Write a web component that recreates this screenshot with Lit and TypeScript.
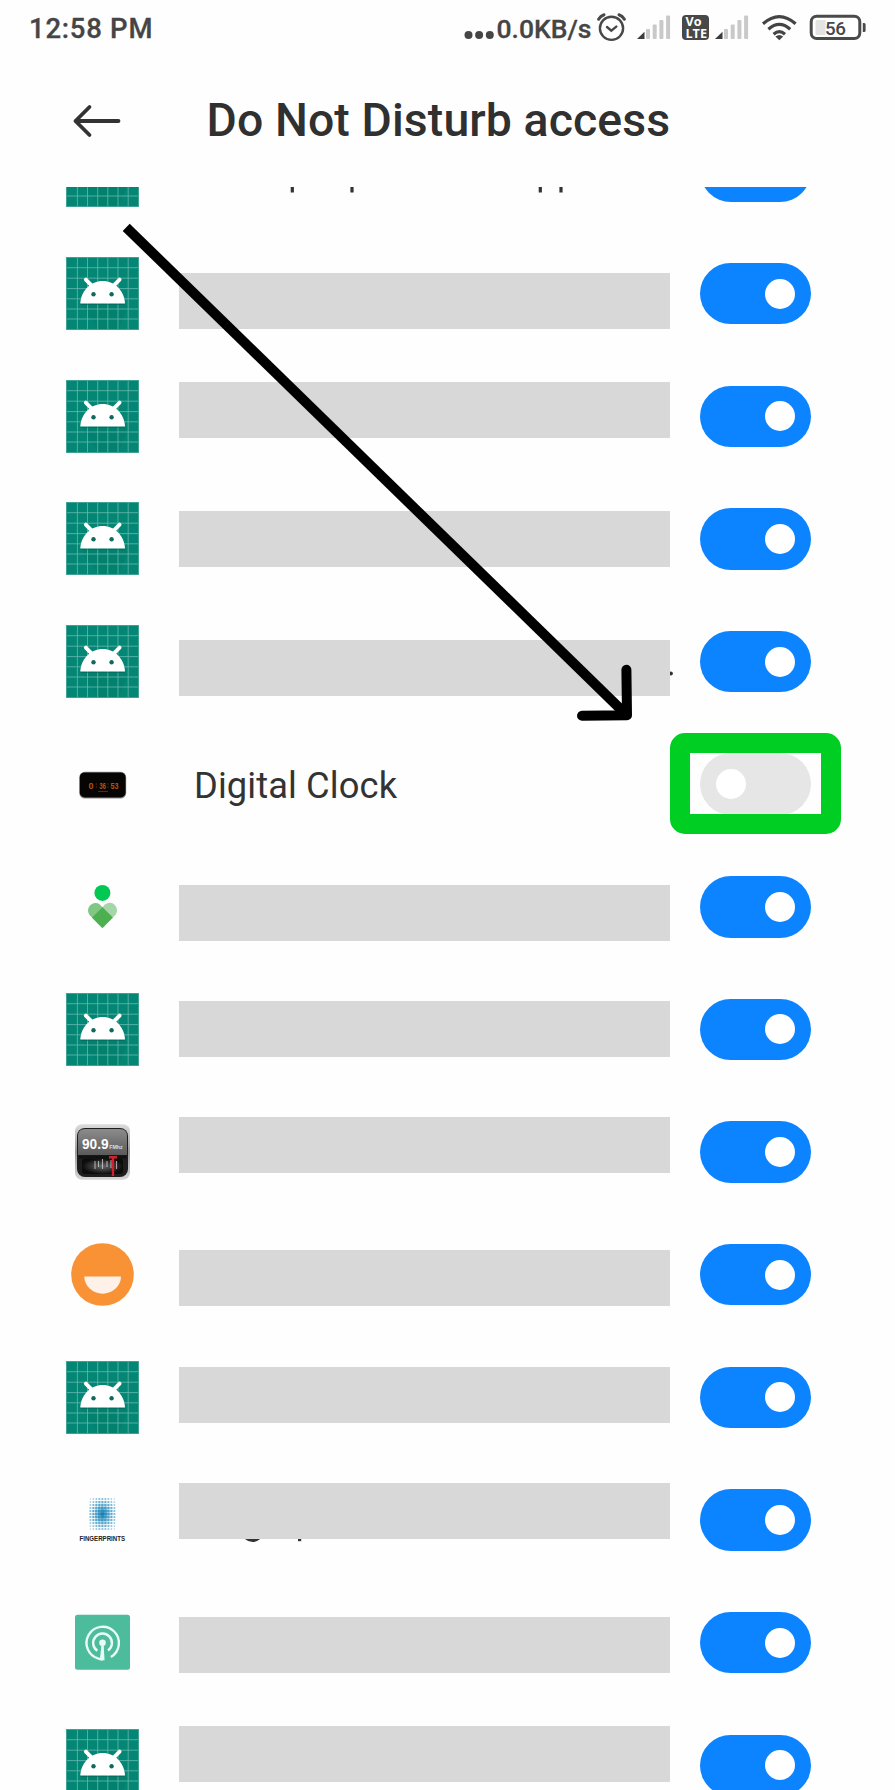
import { LitElement, html, css, svg, nothing } from "lit";
import { customElement, property } from "lit/decorators.js";

type IconName = "android" | "clock" | "wellbeing" | "radio" | "smile" | "finger" | "cast";

interface Row {
  icon: IconName;
  label?: string;
  /** Distance from the row's top edge to its redaction bar. */
  bar?: number;
  off?: boolean;
  trace?: "top" | "dot" | "tails";
}

const PITCH = 122.65;
const FIRST = 109.65;
const barAt = (i: number, y: number) => y - (FIRST + PITCH * i);

const ROWS: Row[] = [
  { icon: "android", trace: "top" },
  { icon: "android", bar: barAt(1, 273) },
  { icon: "android", bar: barAt(2, 382) },
  { icon: "android", bar: barAt(3, 511) },
  { icon: "android", bar: barAt(4, 640), trace: "dot" },
  { icon: "clock", label: "Digital Clock", off: true },
  { icon: "wellbeing", bar: barAt(6, 885) },
  { icon: "android", bar: barAt(7, 1001) },
  { icon: "radio", bar: barAt(8, 1117) },
  { icon: "smile", bar: barAt(9, 1250.5) },
  { icon: "android", bar: barAt(10, 1367) },
  { icon: "finger", bar: barAt(11, 1483), trace: "tails" },
  { icon: "cast", bar: barAt(12, 1617) },
  { icon: "android", bar: barAt(13, 1726) },
];

const GX = [11.4, 21.5, 31.7, 41.8, 52, 62.2];
const GY = [10.7, 21.2, 31.6, 41.8, 52, 62];

const dots = () => {
  const out = [];
  for (let r = 0; r < 11; r++) {
    for (let c = 0; c < 9; c++) {
      const dx = (c - 4) / 4.6;
      const dy = (r - 5) / 5.6;
      const d = Math.sqrt(dx * dx + dy * dy);
      const s = Math.max(1, 3.5 - d * 1.9);
      out.push(svg`<rect x=${36.4 + (c - 4) * 3 - s / 2} y=${30 + (r - 5) * 3 - s / 2}
        width=${s} height=${s} fill="#1583b8" opacity=${Math.max(0.3, 1 - d * 0.5)} />`);
    }
  }
  return out;
};

const ART: Record<IconName, () => unknown> = {
  android: () => svg`
    <rect width="73" height="73" fill="#048674"/>
    <path d="M14.5 46.5 H59 L62 50 L52 73 H33 Z" fill="#037867" opacity=".35"/>
    ${GX.map((x) => svg`<path d="M${x} 0V73" stroke="#66b9ae" stroke-width=".8"/>`)}
    ${GY.map((y) => svg`<path d="M0 ${y}H73" stroke="#66b9ae" stroke-width=".8"/>`)}
    <rect x=".5" y=".5" width="72" height="72" fill="none" stroke="#3fa294" stroke-width="1"/>
    <path d="M14.5 47.2H59" stroke="#04685b" stroke-width="1.4" opacity=".6"/>
    <path d="M14.3 46.4C15 33.6 24.8 24 36.7 24S58.3 33.6 59 46.4Z" fill="#fff"/>
    <path d="M19.8 22.6L26 28.8M53.6 22.6L47.4 28.8" stroke="#fff" stroke-width="3.8" stroke-linecap="round"/>
    <circle cx="27.5" cy="37.2" r="2.2" fill="#10695d"/><circle cx="45.6" cy="37.2" r="2.2" fill="#10695d"/>`,
  clock: () => svg`
    <rect x="13.2" y="23.8" width="47" height="26.8" rx="5.5" fill="#8e8e8e"/>
    <rect x="13.8" y="24.4" width="45.8" height="25" rx="5" fill="#060504"/>
    <g fill="#b0560f" font-family="Liberation Sans, sans-serif" font-weight="700" font-size="8.6">
      <text x="22.4" y="40.6" textLength="5" lengthAdjust="spacingAndGlyphs">0</text>
      <text x="33.2" y="40.6" textLength="6.8" lengthAdjust="spacingAndGlyphs">36</text>
      <text x="44.4" y="40.6" textLength="8" lengthAdjust="spacingAndGlyphs">53</text>
    </g>
    <path d="M30.3 35.5v1M30.3 38.5v1M42 35.5v1M42 38.5v1" stroke="#7c3a0a" stroke-width="1"/>
    <path d="M32 43.4H42" stroke="#54504c" stroke-width=".7"/>`,
  wellbeing: () => svg`
    <circle cx="36.4" cy="22.9" r="8" fill="#00c853"/>
    <path d="M36.4 37.2L26 47.6L23.3 44.8A7.5 7.5 0 0 1 33.8 34.4Z" fill="#81c784"/>
    <path d="M36.4 37.2L46.8 47.6L49.6 44.8A7.5 7.5 0 0 0 39 34.4Z" fill="#a5d6a7"/>
    <path d="M36.4 37L47 47.6L36.4 58.3L25.8 47.6Z" fill="#4caf50"/>`,
  radio: () => svg`
    <defs>
      <linearGradient id="rb" x2="0" y2="1"><stop stop-color="#dcdcdc"/><stop offset=".5" stop-color="#999"/><stop offset="1" stop-color="#d6d6d6"/></linearGradient>
      <linearGradient id="rs" x2="0" y2="1"><stop stop-color="#8c8c8c"/><stop offset="1" stop-color="#5a5a5a"/></linearGradient>
      <radialGradient id="rd"><stop stop-color="#686868"/><stop offset="1" stop-color="#0c0c0c"/></radialGradient>
    </defs>
    <rect x="9" y="8.3" width="55" height="55.5" rx="7" fill="url(#rb)"/>
    <rect x="11" y="12" width="51" height="49" rx="8" fill="#1e1e1e"/>
    <path d="M12 39V20q0-7 7-7H54q7 0 7 7V39Z" fill="url(#rs)"/>
    <rect x="12.5" y="39.5" width="48" height="3" fill="#111"/>
    <rect x="16" y="42.5" width="41" height="15.5" rx="3" fill="url(#rd)"/>
    <path d="M29 45v8M32.5 45v6M36.5 43v10M41 45v6M45 44v8M50.5 45v8" stroke="#ddd" stroke-width="1.1" opacity=".7"/>
    <path d="M43 41.3h8M47 41.5V60" stroke="#d21f2d" stroke-width="2.4"/>
    <text x="16" y="33" textLength="26.5" lengthAdjust="spacingAndGlyphs" fill="#fff" font-family="Liberation Sans, sans-serif" font-weight="700" font-size="14.5">90.9</text>
    <text x="43.2" y="33" textLength="13.5" lengthAdjust="spacingAndGlyphs" fill="#ddd" font-family="Liberation Sans, sans-serif" font-weight="700" font-size="6">FMhz</text>`,
  smile: () => svg`
    <circle cx="36.5" cy="36.5" r="31.3" fill="#f99235"/>
    <path d="M18.3 38.4H55A18.3 17.2 0 0 1 18.3 38.4Z" fill="#fff1e7"/>`,
  finger: () => svg`${dots()}
    <text x="13.5" y="56.6" textLength="45.5" lengthAdjust="spacingAndGlyphs" fill="#222"
      font-family="Liberation Sans, sans-serif" font-weight="700" font-size="6.8">FINGERPRINTS</text>`,
  cast: () => svg`
    <rect x="9" y="8.8" width="55" height="55" rx="2.5" fill="#4dbc9c"/>
    <g fill="none" stroke="#e9fbf5" stroke-width="2.4">
      <path d="M44.8 51A16.2 16.2 0 1 0 32.5 52.6Q35.2 53.6 37 53.2"/>
      <path d="M42 44.6A9.4 9.4 0 1 0 31.4 44.8"/>
    </g>
    <circle cx="36.5" cy="36.8" r="3.3" fill="#e9fbf5"/>
    <path d="M35.6 38H37.6L38.6 54.3H33.8Z" fill="#e9fbf5"/>`,
};

@customElement("app-icon")
class AppIcon extends LitElement {
  @property() name: IconName = "android";
  static styles = css`
    :host { display: block; width: 73px; height: 73px; }
    svg { display: block; }
  `;
  render() {
    return html`<svg width="73" height="73" viewBox="0 0 73 73">${ART[this.name]()}</svg>`;
  }
}

@customElement("dnd-switch")
class DndSwitch extends LitElement {
  @property({ type: Boolean, reflect: true }) off = false;
  static styles = css`
    :host {
      display: flex; align-items: center; justify-content: flex-end;
      box-sizing: border-box; width: 111px; height: 61.5px; padding: 0 15.8px;
      border-radius: 31px; background: #0d84ff;
    }
    :host([off]) { justify-content: flex-start; background: #e6e6e6; }
    .knob { width: 30px; height: 30px; border-radius: 50%; background: #fff; }
  `;
  render() {
    return html`<div class="knob"></div>`;
  }
}

const SIGNAL_TOPS = [29, 24.5, 20, 15.5];

@customElement("status-bar")
class StatusBar extends LitElement {
  static styles = css`
    :host { display: block; height: 56px; color: #454545; }
    .bar { display: flex; justify-content: space-between; height: 56px; padding: 0 28px 0 29px; }
    .time { font-size: 27.5px; font-weight: 500; line-height: 57px; letter-spacing: 0.75px; -webkit-text-stroke: 0.3px; }
    .right { display: flex; }
    .net { font-size: 26.5px; font-weight: 500; line-height: 57px; margin-right: 0.5px; -webkit-text-stroke: 0.3px; }
    svg { display: block; }
  `;
  signal(x: number) {
    return svg`
      <path d="M${x} 39L${x + 7.5} 31.8V39Z" fill="#3c3c3c"/>
      ${SIGNAL_TOPS.map((y, i) => svg`
        <rect x=${x + 9 + i * 6.7} y=${y} width="4" height=${39 - y} rx="1" fill="#c9c9c9"/>`)}`;
  }
  render() {
    return html`<div class="bar">
      <span class="time">12:58 PM</span>
      <div class="right">
        <svg width="33" height="56" viewBox="463.5 0 33 56">
          <g fill="#454545"><circle cx="468" cy="35" r="4"/><circle cx="478.6" cy="35" r="4"/><circle cx="489.3" cy="35" r="4"/></g>
        </svg>
        <span class="net">0.0KB/s</span>
        <svg width="275" height="56" viewBox="592 0 275 56">
          <g fill="none" stroke="#484848" stroke-width="2.4" stroke-linecap="round">
            <circle cx="611.5" cy="28.3" r="11.6"/>
            <path d="M607 27L611.3 30.6L616.3 26.6"/>
            <path d="M598.6 19.2Q600.5 15.8 604 14.7M619 14.7Q622.5 15.8 624.4 19.2" stroke-width="3"/>
          </g>
          ${this.signal(637)}
          <rect x="682" y="15" width="27" height="25" rx="4" fill="#484848"/>
          <g fill="#fff" font-family="Open Sans, sans-serif" font-weight="700">
            <text x="685.5" y="26.4" font-size="11.5" textLength="16" lengthAdjust="spacingAndGlyphs">Vo</text>
            <text x="685.5" y="38" font-size="12.5" textLength="21.5" lengthAdjust="spacingAndGlyphs">LTE</text>
          </g>
          ${this.signal(715)}
          <g fill="none" stroke="#444" stroke-width="3.2">
            <path d="M763 23.8Q779.3 9.5 795.6 23.8"/>
            <path d="M768.4 29.3Q779.3 19.5 790.2 29.3"/>
            <path d="M773.6 34.2Q779.3 29.2 785 34.2"/>
          </g>
          <path d="M775.4 36.6Q779.3 33.6 783.2 36.6L779.3 40.2Z" fill="#444"/>
          <rect x="811.2" y="16.2" width="48.6" height="22.4" rx="5.5" fill="#fff" stroke="#4a4a4a" stroke-width="3"/>
          <path d="M816 20H825.5V35H816Q815.5 35 815.5 34V21Z" fill="#e3e3e3"/>
          <path d="M862.8 23H864.2Q865.6 23 865.6 24.5V30.5Q865.6 32 864.2 32H862.8Z" fill="#4a4a4a"/>
          <text x="825" y="34.6" font-family="Roboto, sans-serif" font-weight="500" font-size="18.8" textLength="21" fill="#484848">56</text>
        </svg>
      </div>
    </div>`;
  }
}

@customElement("app-root")
class AppRoot extends LitElement {
  static styles = css`
    :host {
      display: block; position: relative; width: 895px; height: 1790px; overflow: hidden;
      background: #fefefe; color: #333; font-family: Roboto, sans-serif;
    }
    .header { display: flex; align-items: center; height: 131px; box-sizing: border-box; padding: 0 0 1px 72px; }
    .back { display: block; width: 49px; height: 34px; }
    .title { margin: -2px 0 0 85.5px; font-size: 46.4px; font-weight: 500; line-height: 60px; letter-spacing: 0.1px; color: #303030; white-space: nowrap; }
    .list { height: 1603px; overflow: hidden; }
    .rows { margin-top: -77.35px; }
    .row {
      display: grid; grid-template-columns: 73px 491px 111px; column-gap: 40px;
      height: 122.65px; padding-left: 66px;
    }
    .row app-icon, .row dnd-switch { align-self: center; }
    .row dnd-switch { margin-left: -10px; }
    .cell { position: relative; height: 122.65px; }
    .bar { width: 491px; height: 56px; background: #d8d8d8; }
    .label { padding: 2.5px 0 0 15px; font-size: 36.3px; line-height: 122.65px; letter-spacing: 0.1px; white-space: nowrap; }
    .trace { position: absolute; left: 0; top: 0; width: 520px; height: 122px; }
    .bar-wrap { display: flow-root; position: relative; }
    .frame {
      position: absolute; left: 670px; top: 733px; box-sizing: border-box; width: 171px; height: 101px;
      border: 20px solid #00ce22; border-radius: 15px;
    }
    .arrow { position: absolute; left: 0; top: 0; pointer-events: none; }
  `;

  trace(kind: Row["trace"]) {
    if (kind === "top") {
      return html`<svg class="trace" viewBox="0 0 520 122"><path d="M113.3 76V82.4M173 76V82.4M361.3 76V82.4M382 76V82.4" stroke="#333" stroke-width="3.2"/></svg>`;
    }
    if (kind === "dot") {
      return html`<svg class="trace" viewBox="0 0 520 122"><circle cx="491.9" cy="73.4" r="2" fill="#333"/></svg>`;
    }
    if (kind === "tails") {
      return html`<svg class="trace" viewBox="0 0 520 122"><path d="M66 78.4Q73.5 84.5 81 78.4" fill="none" stroke="#333" stroke-width="3"/><path d="M120.6 76V82.2" stroke="#333" stroke-width="3.2"/></svg>`;
    }
    return nothing;
  }

  render() {
    return html`
      <status-bar></status-bar>
      <div class="header">
        <svg class="back" viewBox="0 0 49 34" fill="none" stroke="#333" stroke-width="3.8" stroke-linecap="round" stroke-linejoin="round">
          <path d="M46.5 17H3.5M17.5 3L3.5 17L17.5 31"/>
        </svg>
        <div class="title">Do Not Disturb access</div>
      </div>
      <div class="list">
        <div class="rows">
          ${ROWS.map((r) => html`
            <div class="row">
              <app-icon .name=${r.icon}></app-icon>
              <div class="cell">
                ${this.trace(r.trace)}
                ${r.label ? html`<div class="label">${r.label}</div>` : nothing}
                ${r.bar !== undefined
                  ? html`<div class="bar-wrap"><div class="bar" style="margin-top:${r.bar}px"></div></div>`
                  : nothing}
              </div>
              <dnd-switch ?off=${r.off}></dnd-switch>
            </div>`)}
        </div>
      </div>
      <div class="frame"></div>
      <svg class="arrow" width="895" height="1790" viewBox="0 0 895 1790" fill="none" stroke="#000" stroke-width="10">
        <path d="M126.2 227.3L627 715.3"/>
        <path d="M626.4 669.8L627 715.3L582 715.8" stroke-linecap="round" stroke-linejoin="round"/>
      </svg>`;
  }
}
